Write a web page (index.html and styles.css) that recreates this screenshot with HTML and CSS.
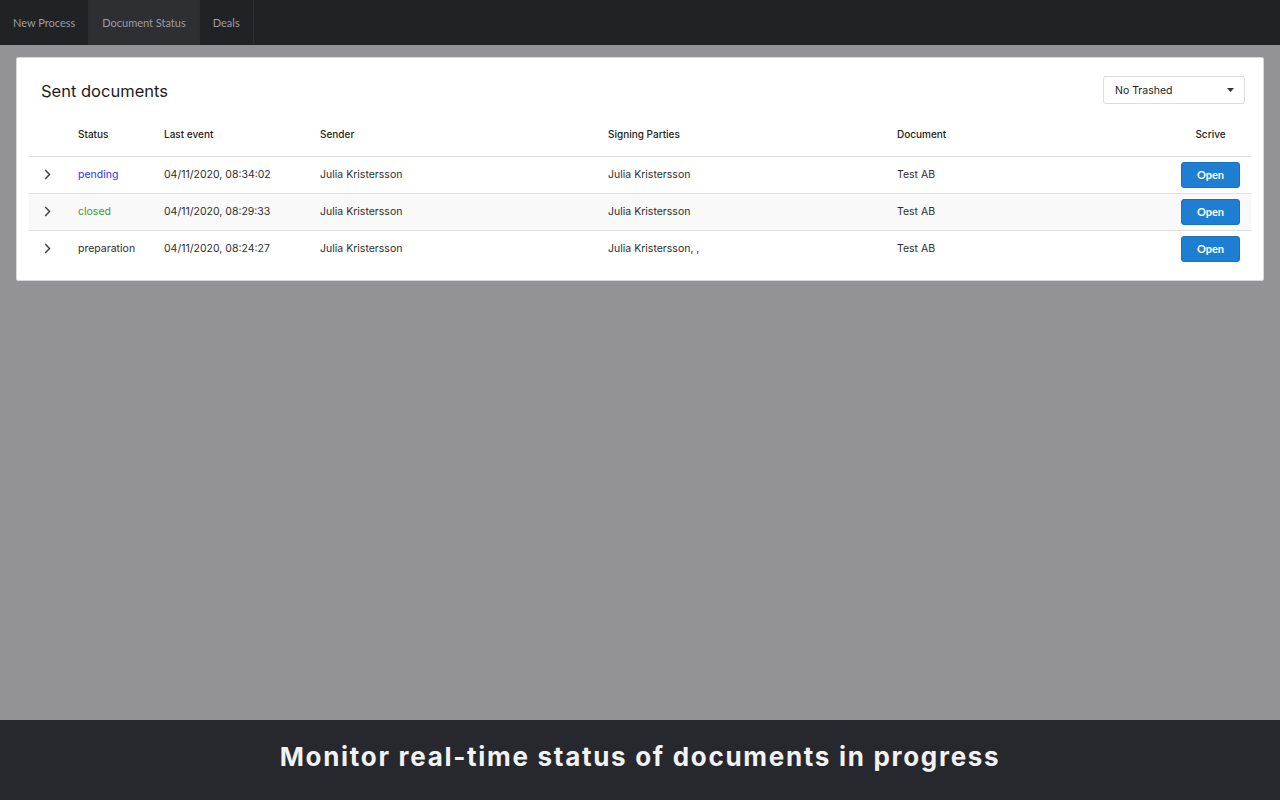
FILE: index.html
```html
<!DOCTYPE html>
<html>
<head>
<meta charset="utf-8">
<link rel="stylesheet" href="styles.css">
</head>
<body>
<div class="page">
  <nav class="nav">
    <a class="tab">New Process</a>
    <a class="tab active">Document Status</a>
    <a class="tab">Deals</a>
  </nav>
  <main class="main">
    <section class="card">
      <div class="card-head">
        <h1 class="title">Sent documents</h1>
        <div class="select">
          <span>No Trashed</span>
          <svg class="caret" width="7" height="4" viewBox="0 0 7 4"><path d="M0 0h7L3.5 4z" fill="#333"/></svg>
        </div>
      </div>
      <table class="docs">
        <colgroup>
          <col class="c1"><col class="c2"><col class="c3"><col class="c4"><col class="c5"><col class="c6"><col class="c7">
        </colgroup>
        <thead>
          <tr>
            <th></th><th>Status</th><th>Last event</th><th>Sender</th><th>Signing Parties</th><th>Document</th><th class="center">Scrive</th>
          </tr>
        </thead>
        <tbody>
          <tr>
            <td class="chev"><svg width="7" height="11" viewBox="0 0 7 11"><path d="M1.2 1l4.3 4.5-4.3 4.5" fill="none" stroke="#444" stroke-width="1.5"/></svg></td>
            <td class="pending">pending</td><td>04/11/2020, 08:34:02</td><td>Julia Kristersson</td><td>Julia Kristersson</td><td>Test AB</td>
            <td class="center"><button class="btn">Open</button></td>
          </tr>
          <tr class="alt">
            <td class="chev"><svg width="7" height="11" viewBox="0 0 7 11"><path d="M1.2 1l4.3 4.5-4.3 4.5" fill="none" stroke="#444" stroke-width="1.5"/></svg></td>
            <td class="closed">closed</td><td>04/11/2020, 08:29:33</td><td>Julia Kristersson</td><td>Julia Kristersson</td><td>Test AB</td>
            <td class="center"><button class="btn">Open</button></td>
          </tr>
          <tr class="last">
            <td class="chev"><svg width="7" height="11" viewBox="0 0 7 11"><path d="M1.2 1l4.3 4.5-4.3 4.5" fill="none" stroke="#444" stroke-width="1.5"/></svg></td>
            <td>preparation</td><td>04/11/2020, 08:24:27</td><td>Julia Kristersson</td><td>Julia Kristersson, ,</td><td>Test AB</td>
            <td class="center"><button class="btn">Open</button></td>
          </tr>
        </tbody>
      </table>
    </section>
  </main>
  <footer class="banner">Monitor real-time status of documents in progress</footer>
</div>
</body>
</html>
```
FILE: styles.css
```css
* { box-sizing: border-box; }
html, body { margin: 0; padding: 0; }
body { width: 1280px; height: 800px; overflow: hidden; background: #939395; font-family: Inter, "Liberation Sans", sans-serif; }
.page { display: flex; flex-direction: column; height: 800px; }
.nav { height: 45px; background: #212226; display: flex; flex: none; }
.tab { font-family: Lato, "Liberation Sans", sans-serif; font-size: 11px; color: #9c9da0; padding: 0 13px; line-height: 45px; border-right: 1px solid #2c2d31; }
.tab.active { background: #2e2f33; }
.main { flex: 1; padding: 12px 16px 0 16px; }
.card { background: #fff; border: 1px solid #d8d8d8; border-radius: 2px; padding: 18px 12px 13px 12px; }
.card-head { display: flex; justify-content: space-between; align-items: center; height: 28px; margin-bottom: 8px; padding: 0 6px 0 12px; }
.title { margin: 0; font-size: 16.5px; font-weight: 400; color: #1d1d1d; letter-spacing: 0; padding-top: 2px; }
.select { width: 142px; height: 28px; border: 1px solid #dcdcdc; border-radius: 3px; display: flex; align-items: center; justify-content: space-between; padding: 0 10px 0 11px; font-size: 10.5px; color: #222; }
.docs { width: 1222px; border-collapse: collapse; table-layout: fixed; font-size: 10.5px; color: #2e2e2e; }
.c1 { width: 37px; } .c2 { width: 86px; } .c3 { width: 156px; } .c4 { width: 288px; } .c5 { width: 289px; } .c6 { width: 285px; } .c7 { width: 81px; }
.docs th { height: 44px; text-align: left; font-weight: 500; font-size: 10px; color: #222; padding: 0 12px; border-bottom: 1px solid #e0e0e0; }
.docs td { height: 37px; padding: 0 12px; border-bottom: 1px solid #e0e0e0; white-space: nowrap; }
.docs tr.last td { border-bottom: none; }
.docs tr.alt td { background: #f9f9f9; }
.docs .center { text-align: center; padding: 0; }
.docs td.chev { padding: 0 0 0 15px; line-height: 0; }
.pending { color: #3030ee; }
.closed { color: #3a9a3a; }
.btn { width: 59px; height: 26px; background: #1e7fd2; border: 1px solid #1a72bf; border-radius: 3px; color: #fff; font-family: Lato, "Liberation Sans", sans-serif; font-weight: 700; font-size: 11px; }
.banner { height: 80px; flex: none; background: #27282d; color: #f2f2f2; display: flex; align-items: center; justify-content: center; font-family: Inter, "Liberation Sans", sans-serif; font-weight: 700; font-size: 26px; letter-spacing: 1.7px; padding-bottom: 7px; }
```
